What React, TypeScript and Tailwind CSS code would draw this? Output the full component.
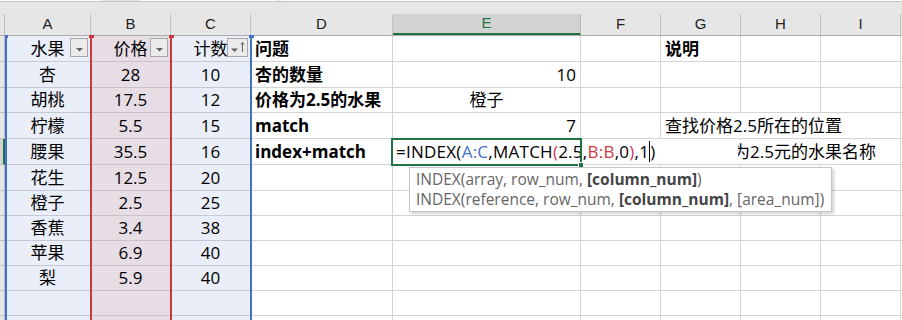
import type { ReactNode } from "react";

type Align = "left" | "center" | "right";

type CellData = {
  text?: ReactNode;
  align?: Align;
  bold?: boolean;
  filter?: "plain" | "sort";
  joinRight?: boolean;
};

// column widths include the 1px gridline on the right edge
const COLS = [
  { letter: "A", w: "w-[86px]", tone: "bg-[#e9eef8] border-[#c4c9d3]" },
  { letter: "B", w: "w-[80px]", tone: "bg-[#e6dde5] border-[#c9c0c9]" },
  { letter: "C", w: "w-[80px]", tone: "bg-[#e9eef8] border-[#c4c9d3]" },
  { letter: "D", w: "w-[142px]", tone: "bg-white border-[#d4d4d4]" },
  { letter: "E", w: "w-[188px]", tone: "bg-white border-[#d4d4d4]" },
  { letter: "F", w: "w-[80px]", tone: "bg-white border-[#d4d4d4]" },
  { letter: "G", w: "w-[80px]", tone: "bg-white border-[#d4d4d4]" },
  { letter: "H", w: "w-[80px]", tone: "bg-white border-[#d4d4d4]" },
  { letter: "I", w: "w-[80px]", tone: "bg-white border-[#d4d4d4]" },
  { letter: "", w: "w-[40px]", tone: "bg-white border-[#d4d4d4]" },
];

const ROWS: { h: string; active?: boolean; cells: CellData[] }[] = [
  {
    h: "h-[26px]",
    cells: [
      { text: "水果", filter: "plain" },
      { text: "价格", filter: "plain" },
      { text: "计数", filter: "sort" },
      { text: "问题", align: "left", bold: true },
      {},
      {},
      { text: "说明", align: "left", bold: true },
    ],
  },
  {
    h: "h-[26px]",
    cells: [{ text: "杏" }, { text: "28" }, { text: "10" }, { text: "杏的数量", align: "left", bold: true }, { text: "10", align: "right" }],
  },
  {
    h: "h-[25px]",
    cells: [{ text: "胡桃" }, { text: "17.5" }, { text: "12" }, { text: "价格为2.5的水果", align: "left", bold: true }, { text: "橙子" }],
  },
  {
    h: "h-[26px]",
    cells: [
      { text: "柠檬" },
      { text: "5.5" },
      { text: "15" },
      { text: "match", align: "left", bold: true },
      { text: "7", align: "right" },
      {},
      { text: "查找价格2.5所在的位置", align: "left", joinRight: true },
      { joinRight: true },
    ],
  },
  {
    h: "h-[26px]",
    active: true,
    cells: [
      { text: "腰果" },
      { text: "35.5" },
      { text: "16" },
      { text: "index+match", align: "left", bold: true },
      {},
      {},
      { text: "查找价格为2.5元的水果名称", align: "left", joinRight: true },
      { joinRight: true },
    ],
  },
  { h: "h-[26px]", cells: [{ text: "花生" }, { text: "12.5" }, { text: "20" }] },
  { h: "h-[25px]", cells: [{ text: "橙子" }, { text: "2.5" }, { text: "25" }] },
  { h: "h-[25px]", cells: [{ text: "香蕉" }, { text: "3.4" }, { text: "38" }] },
  { h: "h-[25px]", cells: [{ text: "苹果" }, { text: "6.9" }, { text: "40" }] },
  { h: "h-[25px]", cells: [{ text: "梨" }, { text: "5.9" }, { text: "40" }] },
  { h: "h-[25px]", cells: [] },
  { h: "h-[25px]", cells: [] },
];

function FilterButton({ sort }: { sort?: boolean }) {
  return (
    <span
      className={`absolute right-[2px] top-[2px] flex h-[19px] items-center justify-center border border-[#a8a8a8] bg-[#ebebeb] ${
        sort ? "w-[21px]" : "w-[18px]"
      }`}
    >
      {sort ? (
        <svg width="19" height="17" viewBox="0 0 19 17">
          <path d="M3 9.5h7l-3.5 3.5z" fill="#5f5f5f" />
          <path d="M14.5 13V3.5M12.8 5.5l1.7-2 1.7 2" stroke="#5f5f5f" strokeWidth="1" fill="none" />
        </svg>
      ) : (
        <svg width="16" height="17" viewBox="0 0 16 17">
          <path d="M5 9h7l-3.5 3.5z" fill="#5f5f5f" />
        </svg>
      )}
    </span>
  );
}

function Cell({ col, data }: { col: (typeof COLS)[number]; data?: CellData }) {
  const align = data?.align ?? "center";
  const justify = align === "left" ? "justify-start pl-[4px]" : align === "right" ? "justify-end pr-[4px]" : "justify-center";
  return (
    <div
      className={`flex h-full shrink-0 items-center whitespace-nowrap border-b ${data?.filter ? "relative" : ""} ${
        data?.joinRight ? "" : "border-r"
      } ${col.w} ${col.tone} ${justify}`}
    >
      {data?.text ? <span className={`relative ${data.bold ? "font-bold" : ""}`}>{data.text}</span> : null}
      {data?.filter ? <FilterButton sort={data.filter === "sort"} /> : null}
    </div>
  );
}

export default function App() {
  return (
    <div className="relative h-[320px] w-[902px] overflow-hidden bg-white font-['Open_Sans','Noto_Sans_CJK_SC',sans-serif] text-[17px] text-black">
      {/* formula bar remnant */}
      <div className="h-[14px] bg-[#e6e6e6]">
        <div className="flex h-[2px] border-b border-[#c6c6c6]">
          <span className="w-[102px] bg-white" />
          <span className="w-[39px]" />
          <span className="w-[137px] bg-white" />
          <span className="w-[3px]" />
          <span className="flex-1 bg-white" />
        </div>
      </div>

      {/* column letters */}
      <div className="flex h-[22px] border-b border-[#ababab] bg-[#e6e6e6] font-['Liberation_Sans',sans-serif] text-[15px] text-[#222]">
        <div className="w-[5px] shrink-0 border-r border-[#bdbdbd]" />
        {COLS.map((c) =>
          c.letter === "E" ? (
            <div
              key={c.letter}
              className={`${c.w} flex shrink-0 items-center justify-center border-b-2 border-r border-b-[#217346] border-r-[#bdbdbd] bg-[#d2d2d2] text-[#217346]`}
            >
              {c.letter}
            </div>
          ) : (
            <div key={c.letter || "j"} className={`${c.w} flex shrink-0 items-center justify-center border-r border-[#c3c3c3]`}>
              {c.letter}
            </div>
          ),
        )}
      </div>

      {ROWS.map((row, i) => (
        <div key={i} className={`flex ${row.h}`}>
          <div
            className={`h-full w-[5px] shrink-0 border-b border-[#bdbdbd] ${
              row.active ? "border-r-2 border-r-[#217346] bg-[#d2d2d2]" : "border-r bg-[#e6e6e6]"
            }`}
          />
          {COLS.map((c, j) => (
            <Cell key={j} col={c} data={row.cells[j]} />
          ))}
        </div>
      ))}

      {/* highlighted ranges A:C and B:B */}
      <div className="absolute left-[5px] top-[36px] bottom-0 w-[2px] bg-[#3f72c8]" />
      <div className="absolute left-[90px] top-[36px] bottom-0 w-[2px] bg-[#c9383f]" />
      <div className="absolute left-[170px] top-[36px] bottom-0 w-[2px] bg-[#c9383f]" />
      <div className="absolute left-[250px] top-[36px] bottom-0 w-[2px] bg-[#3f72c8]" />
      <div className="absolute left-[5px] top-[35px] h-[3px] w-[3px] bg-[#3f72c8]" />
      <div className="absolute left-[89px] top-[35px] h-[3px] w-[5px] bg-[#c9383f]" />
      <div className="absolute left-[169px] top-[35px] h-[3px] w-[5px] bg-[#c9383f]" />
      <div className="absolute left-[249px] top-[35px] h-[3px] w-[5px] bg-[#3f72c8]" />

      {/* cell being edited */}
      <div className="absolute left-[393px] top-[139px] flex h-[25px] w-[345px] items-center whitespace-nowrap bg-white pl-[3px] tracking-[0.25px]">
        <span>=INDEX(</span>
        <span className="text-[#3f72c8]">A:C</span>
        <span>,MATCH</span>
        <span className="text-[#d0375f]">(</span>
        <span>2.5,</span>
        <span className="text-[#c9383f]">B:B</span>
        <span>,0</span>
        <span className="text-[#d0375f]">)</span>
        <span>,1</span>
        <span className="h-[21px] w-px bg-black" />
        <span>)</span>
      </div>
      <div className="absolute left-[391px] top-[138px] h-[28px] w-[191px] border-2 border-[#217346]" />
      <div className="absolute left-[578px] top-[162px] h-[6px] w-[6px] border border-white bg-[#217346]" />

      {/* argument tooltip */}
      <div className="absolute left-[409px] top-[167px] h-[45px] w-[423px] border border-[#c6c6c6] bg-white px-[6px] pt-[1px] text-[15.5px] leading-[20px] text-[#666] shadow-[2px_2px_3px_rgba(0,0,0,0.18)]">
        <div className="whitespace-nowrap">
          INDEX(array, row_num, <span className="font-bold text-[#444]">[column_num]</span>)
        </div>
        <div className="whitespace-nowrap">
          INDEX(reference, row_num, <span className="font-bold text-[#444]">[column_num]</span>, [area_num])
        </div>
      </div>
    </div>
  );
}
